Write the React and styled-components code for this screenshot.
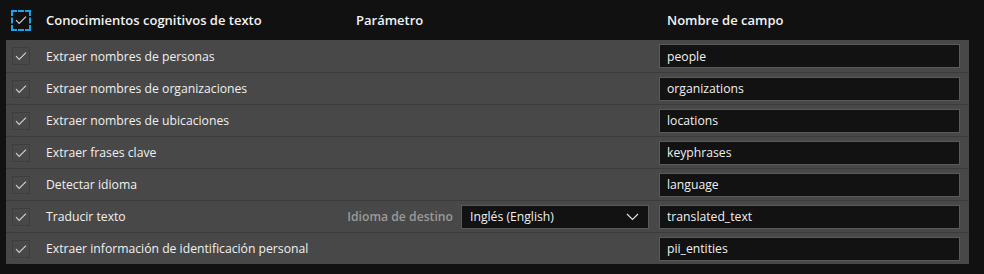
import React from 'react';
import styled, { createGlobalStyle } from 'styled-components';

const GlobalStyle = createGlobalStyle`
  html, body {
    margin: 0;
    padding: 0;
    background: #111111;
  }
  body {
    font-family: "Segoe UI", "Open Sans", "Noto Sans", sans-serif;
    font-size: 12.2px;
    color: #f0f0f0;
  }
`;

const Table = styled.div`
  width: 984px;
  height: 274px;
  background: #111111;
  box-sizing: border-box;
`;

const HeaderRow = styled.div`
  display: grid;
  grid-template-columns: 40px 310px 311px 1fr;
  align-items: center;
  height: 40px;
  padding-left: 6px;
  font-size: 13px;
  font-weight: 600;
  color: #f2f2f2;
`;

const HeadCell = styled.div`
  white-space: nowrap;
`;

const Panel = styled.div`
  margin-left: 6px;
  width: 963px;
  background: #484848;
`;

const Row = styled.div`
  display: grid;
  grid-template-columns: 40px 1fr auto 301px;
  align-items: center;
  height: 32px;
  box-sizing: border-box;
  border-top: ${p => (p.$first ? 'none' : '1px solid #3c3c3c')};
  padding-right: 9px;
`;

const Box = styled.div`
  width: 18px;
  height: 18px;
  box-sizing: border-box;
  border: 1px solid #3e3e3e;
  display: flex;
  align-items: center;
  justify-content: center;
  margin-left: 6px;
`;

const FocusBox = styled(Box)`
  width: 20px;
  height: 21px;
  border: 2px dashed #1aa3e8;
  background: #111111;
  margin-left: 5px;
`;

const Label = styled.div`
  color: #f0f0f0;
  white-space: nowrap;
`;

const ParamCell = styled.div`
  display: flex;
  align-items: center;
  gap: 8px;
  margin-right: 10px;
`;

const ParamLabel = styled.span`
  color: #9a9a9a;
  font-weight: 600;
  white-space: nowrap;
`;

const Select = styled.div`
  width: 188px;
  height: 24px;
  box-sizing: border-box;
  background: #121212;
  border: 1px solid #5a5a5a;
  display: flex;
  align-items: center;
  justify-content: space-between;
  padding: 0 9px 0 8px;
  color: #f0f0f0;
`;

const Field = styled.div`
  width: 301px;
  height: 24px;
  box-sizing: border-box;
  background: #121212;
  border: 1px solid #5a5a5a;
  display: flex;
  align-items: center;
  padding-left: 7px;
  color: #f0f0f0;
`;

const Check = ({ color = '#cfcfcf' }) => (
  <svg width="12" height="10" viewBox="0 0 12 10">
    <path d="M1 5.2 L4.2 8.4 L11 1.6" fill="none" stroke={color} strokeWidth="1.2" />
  </svg>
);

const Chevron = () => (
  <svg width="13" height="8" viewBox="0 0 13 8">
    <path d="M1 1 L6.5 6.5 L12 1" fill="none" stroke="#e0e0e0" strokeWidth="1.2" />
  </svg>
);

const rows = [
  { label: 'Extraer nombres de personas', field: 'people' },
  { label: 'Extraer nombres de organizaciones', field: 'organizations' },
  { label: 'Extraer nombres de ubicaciones', field: 'locations' },
  { label: 'Extraer frases clave', field: 'keyphrases' },
  { label: 'Detectar idioma', field: 'language' },
  { label: 'Traducir texto', field: 'translated_text', param: { name: 'Idioma de destino', value: 'Inglés (English)' } },
  { label: 'Extraer información de identificación personal', field: 'pii_entities' },
];

export default function App() {
  return (
    <>
      <GlobalStyle />
      <Table>
        <HeaderRow>
          <FocusBox>
            <Check />
          </FocusBox>
          <HeadCell>Conocimientos cognitivos de texto</HeadCell>
          <HeadCell>Parámetro</HeadCell>
          <HeadCell>Nombre de campo</HeadCell>
        </HeaderRow>
        <Panel>
          {rows.map((r, i) => (
            <Row key={r.field} $first={i === 0}>
              <Box>
                <Check />
              </Box>
              <Label>{r.label}</Label>
              <ParamCell>
                {r.param && (
                  <>
                    <ParamLabel>{r.param.name}</ParamLabel>
                    <Select>
                      <span>{r.param.value}</span>
                      <Chevron />
                    </Select>
                  </>
                )}
              </ParamCell>
              <Field>{r.field}</Field>
            </Row>
          ))}
        </Panel>
      </Table>
    </>
  );
}
